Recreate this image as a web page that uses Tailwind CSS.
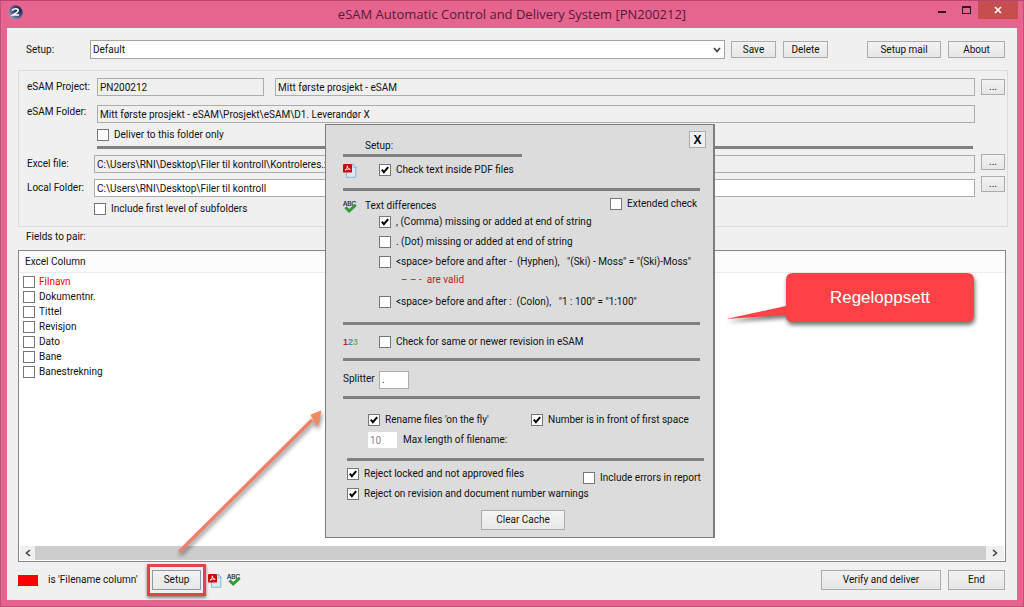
<!DOCTYPE html>
<html lang="en">
<head>
<meta charset="utf-8">
<title>eSAM Automatic Control and Delivery System</title>
<script src="https://cdn.jsdelivr.net/npm/@tailwindcss/browser@4"></script>
</head>
<body class="whitespace-nowrap font-[Roboto,sans-serif] text-[10px] leading-3 text-[#111]">

<svg class="hidden" aria-hidden="true">
  <symbol id="tick" viewBox="0 0 12 12"><path d="M2.8 5.6 L4.9 8.1 L9.2 3.2" fill="none" stroke="#000" stroke-width="2"/></symbol>
  <symbol id="pdf" viewBox="0 0 14 15">
    <path d="M3.5 1.5h7l2.3 2.3v10.5H3.5z" fill="#dbe8f5" stroke="#8fb2d6"/>
    <path d="M10.3 1.5v3h3z" fill="#fff" stroke="#6f9ccb" stroke-width=".6"/>
    <rect x="0" y="1" width="9" height="8.6" rx="1.2" fill="#cc0a0a"/>
    <path d="M2 7.2C3.6 6.4 4.5 4.5 4.4 2.8C4.6 5 5.5 6 7.2 6.3C5.4 5.9 3.6 6.4 2 7.2z" fill="none" stroke="#fff" stroke-width=".9"/>
  </symbol>
  <symbol id="abc" viewBox="0 0 14 14">
    <text x="0" y="5.6" font-family="Liberation Sans" font-size="6.4" fill="#222" stroke="#222" stroke-width=".2">ABC</text>
    <path d="M2.4 7.2L6.2 11L12.6 5" fill="none" stroke="#2d9a35" stroke-width="3"/>
  </symbol>
</svg>

<div class="relative flex min-h-screen flex-col border-t border-[#b9446d] bg-[#e6658f] shadow-[inset_1px_0_0_#c2507a,inset_-1px_-1px_0_#c2507a]">

  <header class="grid h-[27px] grid-cols-[1fr_auto_1fr]">
    <div class="px-2 pt-1">
      <svg class="size-[15px]" viewBox="0 0 15 15" aria-hidden="true">
        <defs><radialGradient id="orb" cx=".75" cy=".3" r=".9"><stop offset="0" stop-color="#17254f"/><stop offset=".5" stop-color="#4a4f7d"/><stop offset="1" stop-color="#b3b3cd"/></radialGradient></defs>
        <circle cx="7.5" cy="7.5" r="7.2" fill="url(#orb)"/>
        <path d="M4.2 5.6C5 3.4 10 3 10.2 5.4C10.3 7.2 7 8.6 5 10H11" fill="none" stroke="#fff" stroke-width="1.7"/>
      </svg>
    </div>
    <h1 class="font-['Open_Sans',sans-serif] text-[13px] leading-[26px] text-[#55183a]">eSAM Automatic Control and Delivery System [PN200212]</h1>
    <div class="flex items-start justify-end pr-1.5">
      <button aria-label="Minimize" class="flex h-[18px] w-6 items-end justify-center pb-1.5"><span class="h-0.5 w-2 bg-[#3a1022]"></span></button>
      <button aria-label="Maximize" class="flex h-[18px] w-6 items-center justify-center"><span class="h-2 w-[9px] border border-t-2 border-[#3a1022]"></span></button>
      <button aria-label="Close" class="flex h-[18px] w-10 items-center justify-center bg-[#c74e4e]">
        <svg class="size-2" viewBox="0 0 8 8"><path d="M1 1L7 7M7 1L1 7" stroke="#fff" stroke-width="1.6"/></svg>
      </button>
    </div>
  </header>

  <main class="mx-[7px] mb-[7px] flex flex-1 flex-col bg-[#f0f0f0] px-[11px] pt-3">

    <div class="flex h-[19px] items-center">
      <label for="setup" class="w-[72px] pl-2">Setup:</label>
      <div class="grid flex-1 items-center">
        <select id="setup" class="col-start-1 row-start-1 h-[19px] appearance-none border border-[#a5a5a5] bg-white px-0.5"><option>Default</option></select>
        <svg class="pointer-events-none col-start-1 row-start-1 mr-1 size-2 justify-self-end" viewBox="0 0 8 8"><path d="M1 2L4 5.5L7 2" fill="none" stroke="#444" stroke-width="1.7"/></svg>
      </div>
      <button class="ml-1.5 h-[17px] w-[45px] border border-[#acacac] bg-linear-to-b from-[#f2f2f2] to-[#e6e6e6]">Save</button>
      <button class="ml-[7px] h-[17px] w-[45px] border border-[#acacac] bg-linear-to-b from-[#f2f2f2] to-[#e6e6e6]">Delete</button>
      <button class="ml-[39px] h-[17px] w-[74px] border border-[#acacac] bg-linear-to-b from-[#f2f2f2] to-[#e6e6e6]">Setup mail</button>
      <button class="ml-[7px] mr-px h-[17px] w-[57px] border border-[#acacac] bg-linear-to-b from-[#f2f2f2] to-[#e6e6e6]">About</button>
    </div>

    <section class="-mr-0.5 mt-[11px] border border-[#dcdcdc] pb-[5px] pl-2 pr-0.5 pt-[7px]">
      <div class="flex items-center">
        <label for="project" class="w-[70px]">eSAM Project:</label>
        <input id="project" readonly value="PN200212" class="h-[18px] w-[167px] border border-[#acacac] px-0.5">
        <input aria-label="Project name" readonly value="Mitt første prosjekt - eSAM" class="ml-[11px] h-[18px] flex-1 border border-[#acacac] px-0.5">
        <button aria-label="Browse projects" class="ml-1.5 h-4 w-6 border border-[#acacac] bg-linear-to-b from-[#f2f2f2] to-[#e6e6e6]">...</button>
      </div>
      <div class="mr-[30px] mt-[9px] flex">
        <label for="folder" class="w-[70px] pt-px">eSAM Folder:</label>
        <input id="folder" readonly value="Mitt første prosjekt - eSAM\Prosjekt\eSAM\D1. Leverandør X" class="h-[18px] flex-1 border border-[#acacac] px-0.5">
      </div>
      <label class="ml-[70px] flex h-[23px] items-center gap-[5px]"><input type="checkbox" class="size-3 shrink-0 appearance-none border border-[#777] bg-white">Deliver to this folder only</label>
      <hr class="ml-[70px] mr-8 h-[3px] border-0 bg-[#808080]">
      <div class="mt-1.5 flex">
        <label for="excel" class="w-[67px] pt-[3px]">Excel file:</label>
        <input id="excel" readonly value="C:\Users\RNI\Desktop\Filer til kontroll\Kontroleres.xlsx" class="h-[18px] flex-1 border border-[#acacac] px-0.5">
        <button aria-label="Browse Excel file" class="-mt-px ml-1.5 h-4 w-6 border border-[#acacac] bg-linear-to-b from-[#f2f2f2] to-[#e6e6e6]">...</button>
      </div>
      <div class="mt-1.5 flex">
        <label for="local" class="w-[67px] pt-[3px]">Local Folder:</label>
        <input id="local" value="C:\Users\RNI\Desktop\Filer til kontroll" class="h-[18px] flex-1 border border-[#acacac] bg-white px-0.5">
        <button aria-label="Browse local folder" class="-mt-[3px] ml-1.5 h-4 w-6 border border-[#acacac] bg-linear-to-b from-[#f2f2f2] to-[#e6e6e6]">...</button>
      </div>
      <label class="ml-[67px] flex h-6 items-center gap-[5px]"><input type="checkbox" class="size-3 shrink-0 appearance-none border border-[#777] bg-white">Include first level of subfolders</label>
    </section>

    <h2 class="mb-[3px] pl-2 leading-5">Fields to pair:</h2>

    <section class="flex flex-1 flex-col border border-[#828790] bg-white">
      <div class="h-[22px] border-b border-[#ececec] bg-[#fcfcfc] pl-1.5 leading-[22px]">Excel Column</div>
      <ul class="flex-1 pl-1 pt-px">
        <li><label class="flex h-[15px] items-center gap-1 text-[#f00]"><input type="checkbox" class="size-3 shrink-0 appearance-none border border-[#777] bg-white">Filnavn</label></li>
        <li><label class="flex h-[15px] items-center gap-1"><input type="checkbox" class="size-3 shrink-0 appearance-none border border-[#777] bg-white">Dokumentnr.</label></li>
        <li><label class="flex h-[15px] items-center gap-1"><input type="checkbox" class="size-3 shrink-0 appearance-none border border-[#777] bg-white">Tittel</label></li>
        <li><label class="flex h-[15px] items-center gap-1"><input type="checkbox" class="size-3 shrink-0 appearance-none border border-[#777] bg-white">Revisjon</label></li>
        <li><label class="flex h-[15px] items-center gap-1"><input type="checkbox" class="size-3 shrink-0 appearance-none border border-[#777] bg-white">Dato</label></li>
        <li><label class="flex h-[15px] items-center gap-1"><input type="checkbox" class="size-3 shrink-0 appearance-none border border-[#777] bg-white">Bane</label></li>
        <li><label class="flex h-[15px] items-center gap-1"><input type="checkbox" class="size-3 shrink-0 appearance-none border border-[#777] bg-white">Banestrekning</label></li>
      </ul>
      <div class="mx-px mb-px flex h-[14px] bg-[#f0f0f0]">
        <button aria-label="Scroll left" class="flex w-[15px] items-center justify-center"><svg class="size-2" viewBox="0 0 8 8"><path d="M6 1L2.5 4L6 7" fill="none" stroke="#444" stroke-width="1.6"/></svg></button>
        <div class="flex-1 bg-[#cdcdcd]"></div>
        <button aria-label="Scroll right" class="flex w-[18px] items-center justify-center"><svg class="size-2" viewBox="0 0 8 8"><path d="M2 1L5.5 4L2 7" fill="none" stroke="#444" stroke-width="1.6"/></svg></button>
      </div>
    </section>

    <footer class="flex h-[38px] items-center pb-0.5">
      <span class="h-[11px] w-5 bg-[#f00]"></span>
      <span class="ml-2.5 w-[104px]">is 'Filename column'</span>
      <div class="relative">
        <button class="block h-5 w-[49px] border border-[#8b9aa8] bg-linear-to-b from-[#f2f2f2] to-[#e8e8e8]">Setup</button>
        <span class="pointer-events-none absolute -inset-x-[5px] -inset-y-[6px] border-3 border-[#e04545] shadow-[0_2px_3px_rgba(0,0,0,0.45)]"></span>
      </div>
      <svg class="ml-[7px] h-[15px] w-[14px]"><use href="#pdf"/></svg>
      <svg class="ml-[5px] size-[14px]"><use href="#abc"/></svg>
      <button class="ml-auto h-5 w-[120px] border border-[#acacac] bg-linear-to-b from-[#f2f2f2] to-[#e6e6e6]">Verify and deliver</button>
      <button class="ml-[7px] mr-px h-5 w-[57px] border border-[#acacac] bg-linear-to-b from-[#f2f2f2] to-[#e6e6e6]">End</button>
    </footer>
  </main>

  <!-- Setup dialog floating over the main form -->
  <div role="dialog" aria-label="Setup" class="absolute left-[325px] top-[123px] w-[390px] border border-r-2 border-[#7d7d7d] bg-[#dcdcdc] pb-[7px] pl-[17px] pr-[5px]">
    <div class="flex h-[29px] items-end justify-between">
      <span class="pl-[22px] leading-4">Setup:</span>
      <button aria-label="Close setup" class="mb-1.5 mr-0.5 size-[17px] border border-[#acacac] bg-[#f0f0f0] font-['Liberation_Sans'] text-[12px] font-bold text-black">X</button>
    </div>
    <hr class="h-[3px] w-[179px] border-0 bg-[#808080]">
    <div class="mb-[5px] flex h-[26px] items-center">
      <svg class="h-[15px] w-[14px]"><use href="#pdf"/></svg>
      <label class="ml-[22px] flex items-center gap-[5px]"><span class="grid"><input type="checkbox" checked class="peer col-start-1 row-start-1 size-3 appearance-none border border-[#777] bg-white"><svg class="pointer-events-none invisible col-start-1 row-start-1 size-3 peer-checked:visible"><use href="#tick"/></svg></span>Check text inside PDF files</label>
    </div>
    <hr class="mr-2 h-[3px] border-0 bg-[#808080]">
    <div class="flex h-[21px] items-end">
      <svg class="-mb-0.5 size-[14px]"><use href="#abc"/></svg>
      <span class="ml-2 w-[245px]">Text differences</span>
      <label class="mb-0.5 flex items-center gap-[5px]"><input type="checkbox" class="size-3 shrink-0 appearance-none border border-[#777] bg-white">Extended check</label>
    </div>
    <div class="pl-9">
      <label class="flex h-5 items-center gap-[5px]"><span class="grid"><input type="checkbox" checked class="peer col-start-1 row-start-1 size-3 appearance-none border border-[#777] bg-white"><svg class="pointer-events-none invisible col-start-1 row-start-1 size-3 peer-checked:visible"><use href="#tick"/></svg></span>, (Comma) missing or added at end of string</label>
      <label class="flex h-5 items-center gap-[5px]"><input type="checkbox" class="size-3 shrink-0 appearance-none border border-[#777] bg-white">. (Dot) missing or added at end of string</label>
      <label class="flex h-5 items-center gap-[5px] whitespace-pre"><input type="checkbox" class="size-3 shrink-0 appearance-none border border-[#777] bg-white">&lt;space&gt; before and after -  (Hyphen),   "(Ski) - Moss" = "(Ski)-Moss"</label>
      <p class="pl-[22px] leading-4 text-[#c01828]">– – -&nbsp; are valid</p>
      <label class="mt-1 flex h-5 items-center gap-[5px] whitespace-pre"><input type="checkbox" class="size-3 shrink-0 appearance-none border border-[#777] bg-white">&lt;space&gt; before and after :  (Colon),   "1 : 100" = "1:100"</label>
    </div>
    <hr class="mr-2 mt-2.5 h-[3px] border-0 bg-[#808080]">
    <div class="flex h-[33px] items-center">
      <span class="w-9 font-['Liberation_Sans'] text-[9px] font-bold"><span class="text-[#b5283c]">1</span><span class="text-[#3f8fb0]">2</span><span class="text-[#7fae58]">3</span></span>
      <label class="flex items-center gap-[5px]"><input type="checkbox" class="size-3 shrink-0 appearance-none border border-[#777] bg-white">Check for same or newer revision in eSAM</label>
    </div>
    <hr class="mr-2 h-[3px] border-0 bg-[#808080]">
    <div class="flex h-[35px] items-center">
      <label for="splitter" class="w-9">Splitter</label>
      <input id="splitter" value="." class="mt-0.5 h-[18px] w-[30px] border border-[#acacac] bg-white px-0.5">
    </div>
    <hr class="mr-2 h-[3px] border-0 bg-[#808080]">
    <div class="mt-[11px] flex h-5 items-center pl-[25px]">
      <label class="flex w-[163px] items-center gap-[5px]"><span class="grid"><input type="checkbox" checked class="peer col-start-1 row-start-1 size-3 appearance-none border border-[#777] bg-white"><svg class="pointer-events-none invisible col-start-1 row-start-1 size-3 peer-checked:visible"><use href="#tick"/></svg></span>Rename files 'on the fly'</label>
      <label class="flex items-center gap-[5px]"><span class="grid"><input type="checkbox" checked class="peer col-start-1 row-start-1 size-3 appearance-none border border-[#777] bg-white"><svg class="pointer-events-none invisible col-start-1 row-start-1 size-3 peer-checked:visible"><use href="#tick"/></svg></span>Number is in front of first space</label>
    </div>
    <div class="flex h-5 items-center pl-[25px]">
      <input id="maxlen" value="10" class="h-4 w-[29px] bg-white px-0.5 text-[#888]">
      <label for="maxlen" class="ml-1.5">Max length of filename:</label>
    </div>
    <hr class="ml-1 mr-1 mt-2 h-[3px] border-0 bg-[#808080]">
    <div class="mt-[3px] flex pl-1">
      <div class="w-[236px]">
        <label class="flex h-5 items-center gap-[5px]"><span class="grid"><input type="checkbox" checked class="peer col-start-1 row-start-1 size-3 appearance-none border border-[#777] bg-white"><svg class="pointer-events-none invisible col-start-1 row-start-1 size-3 peer-checked:visible"><use href="#tick"/></svg></span>Reject locked and not approved files</label>
        <label class="flex h-5 items-center gap-[5px]"><span class="grid"><input type="checkbox" checked class="peer col-start-1 row-start-1 size-3 appearance-none border border-[#777] bg-white"><svg class="pointer-events-none invisible col-start-1 row-start-1 size-3 peer-checked:visible"><use href="#tick"/></svg></span>Reject on revision and document number warnings</label>
      </div>
      <label class="flex h-7 items-center gap-[5px]"><input type="checkbox" class="size-3 shrink-0 appearance-none border border-[#777] bg-white">Include errors in report</label>
    </div>
    <button class="ml-[138px] mt-1.5 block h-5 w-[84px] border border-[#acacac] bg-linear-to-b from-[#f4f4f4] to-[#e8e8e8]">Clear Cache</button>
  </div>

  <!-- Annotation arrow from the Setup button to the dialog -->
  <svg class="pointer-events-none absolute left-[170px] top-[399px] h-[164px] w-[160px] drop-shadow-[1px_3px_2px_rgba(0,0,0,0.45)]" viewBox="0 0 160 164" aria-hidden="true">
    <path d="M9 152L142 20" stroke="#f0806a" stroke-width="3.4"/>
    <path d="M151 11L141 15L147 26z" fill="#f58a60" stroke="#f58a60"/>
  </svg>

  <!-- Annotation callout -->
  <div class="absolute left-[722px] top-[267px] h-[64px] w-[260px]">
    <svg class="absolute inset-0 h-full w-full drop-shadow-[1px_3px_2px_rgba(0,0,0,0.55)]" viewBox="0 0 260 64" aria-hidden="true">
      <path d="M71 5H245Q252 5 252 12V47Q252 54 245 54H71Q64 54 64 48V47L4 51L64 38V12Q64 5 71 5z" fill="#fe4146"/>
    </svg>
    <span class="absolute left-[64px] top-[5px] w-[188px] text-center font-['Liberation_Sans'] text-[17px] leading-[49px] text-white">Regeloppsett</span>
  </div>
</div>
</body>
</html>
